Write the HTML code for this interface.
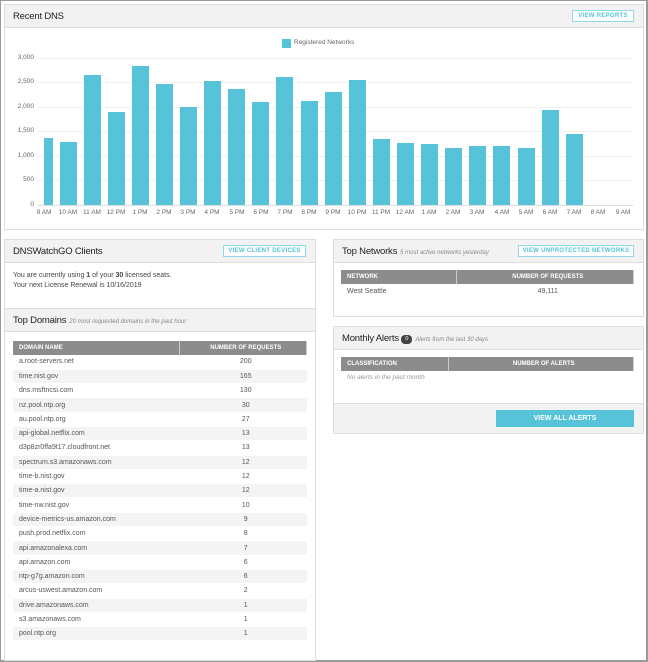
<!DOCTYPE html>
<html><head><meta charset="utf-8"><style>
*{box-sizing:border-box;margin:0;padding:0}
body{width:648px;height:662px;background:#fff;font-family:"Liberation Sans",sans-serif;color:#333;position:relative;overflow:hidden}
.frame{position:absolute;left:0;top:0;width:648px;height:662px;border:1px solid #9a9a9a;border-right:2px solid #9a9a9a;border-bottom:2px solid #9a9a9a}
.panel{position:absolute;border:1px solid #ddd;background:#fff}
.hd{position:absolute;left:0;right:0;top:0;height:23px;background:#f2f2f2;border-bottom:1px solid #ddd;font-size:9.5px;color:#222;padding:6px 8px;letter-spacing:-0.2px}
.hd i{font-size:6px;color:#888;margin-left:3px;letter-spacing:0}
.btn{position:absolute;top:5px;height:12px;border:1px solid #8fd9e8;background:#fff;color:#56c3d8;font-size:6px;font-weight:bold;text-align:center;line-height:10px;letter-spacing:.3px}
.t{position:absolute;font-size:7px;color:#444}
table{position:absolute;border-collapse:collapse;font-size:7px;color:#555}
th{background:#8c8c8c;color:#fff;font-size:6px;height:14px;text-align:left;padding-left:6px;border-right:1px solid #ccc;font-weight:bold}
th.c{text-align:center}
td{height:14.3px;padding-left:6px;border-bottom:1px solid #fff}
td.c{text-align:center}
tr:nth-child(odd) td{background:#f4f4f4}
table.n tr td{background:#fff}
.bar{position:absolute;background:#56c3d8;bottom:457px}
.yl{position:absolute;left:14px;font-size:6.5px;color:#666;width:20px;text-align:right}
.gl{position:absolute;left:38px;width:595px;height:1px;background:#f0f0f0}
.xl{position:absolute;top:209px;font-size:6.5px;color:#666;width:24px;text-align:center}
</style></head><body>
<div class="frame"></div>

<div class="panel" style="left:4px;top:4px;width:640px;height:226px">
 <div class="hd">Recent DNS<div class="btn" style="right:9px;width:62px">VIEW REPORTS</div></div>
</div>
<div style="position:absolute;left:282px;top:39px;width:9px;height:9px;background:#56c3d8"></div>
<div class="t" style="left:294px;top:39px;font-size:6.5px;color:#666">Registered Networks</div>

<div class="gl" style="top:58px"></div><div class="gl" style="top:82px"></div><div class="gl" style="top:107px"></div><div class="gl" style="top:131px"></div><div class="gl" style="top:156px"></div><div class="gl" style="top:180px"></div><div class="gl" style="top:205px;background:#ddd"></div>
<div class="yl" style="top:54px">3,000</div><div class="yl" style="top:78px">2,500</div><div class="yl" style="top:103px">2,000</div><div class="yl" style="top:127px">1,500</div><div class="yl" style="top:152px">1,000</div><div class="yl" style="top:176px">500</div><div class="yl" style="top:201px">0</div>

<div class="bar" style="left:44px;width:9px;height:67px"></div>
<div class="bar" style="left:60px;width:17px;height:63px"></div>
<div class="bar" style="left:84px;width:17px;height:130px"></div>
<div class="bar" style="left:108px;width:17px;height:93px"></div>
<div class="bar" style="left:132px;width:17px;height:139px"></div>
<div class="bar" style="left:156px;width:17px;height:121px"></div>
<div class="bar" style="left:180px;width:17px;height:98px"></div>
<div class="bar" style="left:204px;width:17px;height:124px"></div>
<div class="bar" style="left:228px;width:17px;height:116px"></div>
<div class="bar" style="left:252px;width:17px;height:103px"></div>
<div class="bar" style="left:276px;width:17px;height:128px"></div>
<div class="bar" style="left:301px;width:17px;height:104px"></div>
<div class="bar" style="left:325px;width:17px;height:113px"></div>
<div class="bar" style="left:349px;width:17px;height:125px"></div>
<div class="bar" style="left:373px;width:17px;height:66px"></div>
<div class="bar" style="left:397px;width:17px;height:62px"></div>
<div class="bar" style="left:421px;width:17px;height:61px"></div>
<div class="bar" style="left:445px;width:17px;height:57px"></div>
<div class="bar" style="left:469px;width:17px;height:59px"></div>
<div class="bar" style="left:493px;width:17px;height:59px"></div>
<div class="bar" style="left:518px;width:17px;height:57px"></div>
<div class="bar" style="left:542px;width:17px;height:95px"></div>
<div class="bar" style="left:566px;width:17px;height:71px"></div>

<div class="xl" style="left:32px">9 AM</div><div class="xl" style="left:56px">10 AM</div><div class="xl" style="left:80px">11 AM</div><div class="xl" style="left:104px">12 PM</div><div class="xl" style="left:128px">1 PM</div><div class="xl" style="left:152px">2 PM</div><div class="xl" style="left:176px">3 PM</div><div class="xl" style="left:200px">4 PM</div><div class="xl" style="left:225px">5 PM</div><div class="xl" style="left:249px">6 PM</div><div class="xl" style="left:273px">7 PM</div><div class="xl" style="left:297px">8 PM</div><div class="xl" style="left:321px">9 PM</div><div class="xl" style="left:345px">10 PM</div><div class="xl" style="left:369px">11 PM</div><div class="xl" style="left:393px">12 AM</div><div class="xl" style="left:417px">1 AM</div><div class="xl" style="left:441px">2 AM</div><div class="xl" style="left:465px">3 AM</div><div class="xl" style="left:490px">4 AM</div><div class="xl" style="left:514px">5 AM</div><div class="xl" style="left:538px">6 AM</div><div class="xl" style="left:562px">7 AM</div><div class="xl" style="left:586px">8 AM</div><div class="xl" style="left:611px">9 AM</div>

<div class="panel" style="left:4px;top:239px;width:312px;height:77px">
 <div class="hd">DNSWatchGO Clients<div class="btn" style="right:9px;width:83px">VIEW CLIENT DEVICES</div></div>
 <div class="t" style="left:8px;top:31px;line-height:10px">You are currently using <b>1</b> of your <b>30</b> licensed seats.<br>Your next License Renewal is 10/16/2019</div>
</div>

<div class="panel" style="left:4px;top:308px;width:312px;height:353px">
 <div class="hd">Top Domains<i>20 most requested domains in the past hour</i></div>
</div>
<table style="left:13px;top:341px;width:294px">
<tr><th style="width:166px">DOMAIN NAME</th><th class="c">NUMBER OF REQUESTS</th></tr>
<tr><td>a.root-servers.net</td><td class="c">200</td></tr>
<tr><td>time.nist.gov</td><td class="c">165</td></tr>
<tr><td>dns.msftncsi.com</td><td class="c">130</td></tr>
<tr><td>nz.pool.ntp.org</td><td class="c">30</td></tr>
<tr><td>au.pool.ntp.org</td><td class="c">27</td></tr>
<tr><td>api-global.netflix.com</td><td class="c">13</td></tr>
<tr><td>d3p8zr0ffa9t17.cloudfront.net</td><td class="c">13</td></tr>
<tr><td>spectrum.s3.amazonaws.com</td><td class="c">12</td></tr>
<tr><td>time-b.nist.gov</td><td class="c">12</td></tr>
<tr><td>time-a.nist.gov</td><td class="c">12</td></tr>
<tr><td>time-nw.nist.gov</td><td class="c">10</td></tr>
<tr><td>device-metrics-us.amazon.com</td><td class="c">9</td></tr>
<tr><td>push.prod.netflix.com</td><td class="c">8</td></tr>
<tr><td>api.amazonalexa.com</td><td class="c">7</td></tr>
<tr><td>api.amazon.com</td><td class="c">6</td></tr>
<tr><td>ntp-g7g.amazon.com</td><td class="c">6</td></tr>
<tr><td>arcus-uswest.amazon.com</td><td class="c">2</td></tr>
<tr><td>drive.amazonaws.com</td><td class="c">1</td></tr>
<tr><td>s3.amazonaws.com</td><td class="c">1</td></tr>
<tr><td>pool.ntp.org</td><td class="c">1</td></tr>
</table>

<div class="panel" style="left:333px;top:239px;width:311px;height:78px">
 <div class="hd">Top Networks<i>5 most active networks yesterday</i><div class="btn" style="right:9px;width:116px">VIEW UNPROTECTED NETWORKS</div></div>
</div>
<table class="n" style="left:341px;top:270px;width:293px">
<tr><th style="width:115px">NETWORK</th><th class="c">NUMBER OF REQUESTS</th></tr>
<tr><td style="padding-top:2px">West Seattle</td><td class="c" style="padding-top:2px">49,111</td></tr>
</table>

<div class="panel" style="left:333px;top:326px;width:311px;height:108px">
 <div class="hd">Monthly Alerts <span style="display:inline-block;width:11px;height:9px;border-radius:4px;background:#444;color:#fff;font-size:5.5px;text-align:center;line-height:9px;vertical-align:1px">0</span><i>Alerts from the last 30 days</i></div>
 <div style="position:absolute;left:0;right:0;bottom:0;height:30px;background:#f2f2f2;border-top:1px solid #ddd"></div>
 <div style="position:absolute;left:162px;top:83px;width:138px;height:17px;background:#56c3d8;color:#fff;font-size:7px;font-weight:bold;text-align:center;line-height:17px">VIEW ALL ALERTS</div>
</div>
<table class="n" style="left:341px;top:357px;width:293px">
<tr><th style="width:107px">CLASSIFICATION</th><th class="c">NUMBER OF ALERTS</th></tr>
<tr><td colspan="2" style="font-style:italic;color:#999;font-size:6.5px">No alerts in the past month</td></tr>
</table>
</body></html>
